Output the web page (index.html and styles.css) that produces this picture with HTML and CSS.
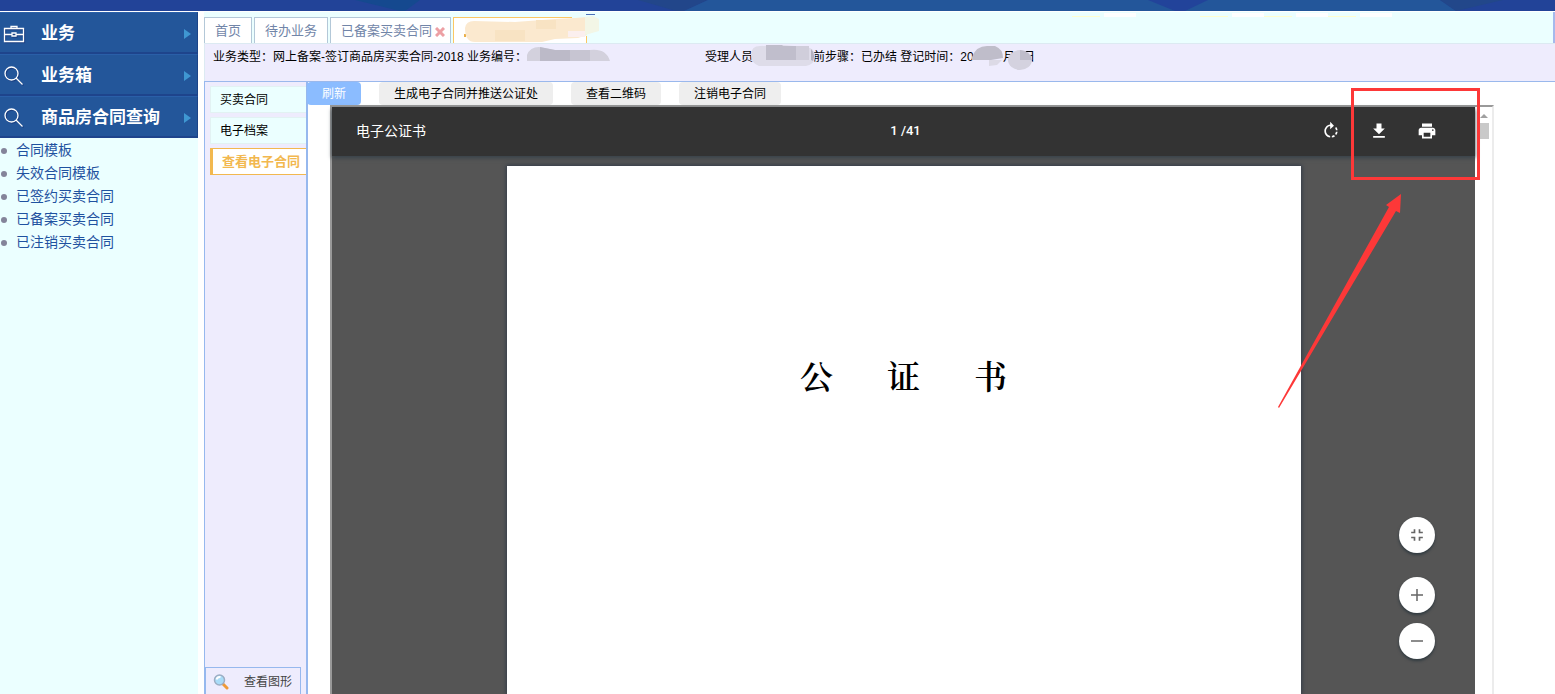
FILE: index.html
```html
<!DOCTYPE html>
<html lang="zh-CN">
<head>
<meta charset="utf-8">
<title>查看电子合同</title>
<link rel="stylesheet" href="styles.css">
</head>
<body>
<header class="banner">
  <svg viewBox="0 0 1555 11" preserveAspectRatio="none" aria-hidden="true">
    <path fill="#224398" d="M0 0H1555V11H0z"/>
    <path fill="#15498f" d="M355 0H420L405 11H400z"/>
    <path fill="#22468a" d="M638 0H708L684 11H676z"/>
    <path fill="#23569a" d="M708 0H1440L1456 11H684z"/>
    <path fill="#22439a" d="M1148 0H1208L1185 11H1175z"/>
    <path fill="#22478a" d="M1440 0H1503L1456 11z"/>
  </svg>
</header>
<div class="layout">
  <aside class="sidebar">
    <nav class="menu">
      <button class="menu-item" type="button">
        <svg class="menu-icon" viewBox="0 0 22 22" aria-hidden="true"><path d="M1.500 5.500h19v13h-19zM8 5V3.500h6V5M1.500 11.500H9M13 11.500h7.500M9 10h4v3H9z"/></svg>
        <span>业务</span><i class="caret"></i>
      </button>
      <button class="menu-item" type="button">
        <svg class="menu-icon" viewBox="0 0 22 22" aria-hidden="true"><circle cx="8.500" cy="8.500" r="6.500"/><path d="M13 13l6.500 6.500"/></svg>
        <span>业务箱</span><i class="caret"></i>
      </button>
      <button class="menu-item" type="button">
        <svg class="menu-icon" viewBox="0 0 22 22" aria-hidden="true"><circle cx="8.500" cy="8.500" r="6.500"/><path d="M13 13l6.500 6.500"/></svg>
        <span>商品房合同查询</span><i class="caret"></i>
      </button>
    </nav>
    <ul class="links">
      <li><a href="#">合同模板</a></li>
      <li><a href="#">失效合同模板</a></li>
      <li><a href="#">已签约买卖合同</a></li>
      <li><a href="#">已备案买卖合同</a></li>
      <li><a href="#">已注销买卖合同</a></li>
    </ul>
  </aside>
  <main class="content">
    <div class="tabs">
      <button class="tab" type="button">首页</button>
      <button class="tab" type="button">待办业务</button>
      <button class="tab closable" type="button">已备案买卖合同<svg class="close" viewBox="0 0 10 10" aria-hidden="true"><path d="M1 1l8 8M9 1L1 9"/></svg></button>
      <button class="tab active" type="button" aria-label="当前业务">
        <svg class="tab-mask" viewBox="0 0 146 34" aria-hidden="true">
          <path fill="#4d70b8" d="M133 0h9v1h-9z"/>
          <path fill="#eab04a" d="M11 20h2v3h-2z"/>
          <path fill="#ebffff" d="M119 3h27v19h-27z"/>
          <path fill="#fff" d="M119 6h13v16h-13z"/>
          <path fill="#fbe9cf" d="M12 14q1-7 9-7L62 8l40-3 20-1 12-1v18l-9 3-23 1-13 3H22q-10 0-10-14z"/>
          <path fill="#f8e3c3" d="M42 16h30v11H42zM83 6h20v9H83z"/>
          <path fill="#fbefee" d="M115 17h17v6h-17z"/>
          <path fill="#f3f6e6" d="M132 3l8-1 6 3v12l-14 4z"/>
        </svg>
      </button>
      <svg class="strip-marks" viewBox="0 0 323 6" aria-hidden="true">
        <path fill="#ffffcf" d="M0 4h28v1H0zM128 4h28v1h-28zM192 4h28v1h-28zM256 4h28v1h-28z"/>
        <path fill="#fff" d="M32 1h32v4H32zM160 1h32v4h-32zM224 1h32v4h-32zM288 1h32v4h-32z"/>
      </svg>
    </div>
    <section class="info">
      <span class="info-type">业务类型：网上备案-签订商品房买卖合同-2018 业务编号：</span>
      <svg class="mask-number" viewBox="0 0 83 15" aria-hidden="true"><path fill="#d3d1dd" d="M0 14V8Q3 0 12 0l16 3h35q16-2 20 11z"/><path fill="#bcbac8" d="M13 0l15 3h15v11H13z"/><path fill="#c7c5d2" d="M43 3h20v11H43z"/></svg>
      <span class="info-person">受理人员</span>
      <svg class="mask-person" viewBox="0 0 64 22" aria-hidden="true"><path fill="#dedce9" d="M0 10Q0 1 9 1l22-1 24 2q9 1 9 9t-9 10H8Q0 18 0 10z"/><path fill="#c0becc" d="M15 0h16l1 1h13v14H15z"/><path fill="#d0cedb" d="M45 1h13v14H45z"/><path fill="#b4b2bf" d="M60 4q5 5 2 12l-2-1z"/></svg>
      <span class="info-step">前步骤：已办结 登记时间：20</span>
      <svg class="mask-year" viewBox="0 0 31 22" aria-hidden="true"><path fill="#bfbdca" d="M0 12Q4 1 15 1h8q8 3 8 12l-12 2H0z"/><path fill="#dcdae6" d="M17 15h13l-5 5-8 1z"/></svg>
      <span>月</span>
      <svg class="mask-day" viewBox="0 0 24 24" aria-hidden="true"><ellipse cx="12" cy="14" rx="12" ry="10" fill="#d4d2df"/><path fill="#bfbdcb" d="M12 4q10 1 12 10H12z"/></svg>
      <span class="info-day">日</span>
    </section>
    <div class="workspace">
      <aside class="views">
        <button class="view" type="button">买卖合同</button>
        <button class="view" type="button">电子档案</button>
        <button class="view selected" type="button">查看电子合同</button>
        <button class="graph" type="button">
          <svg viewBox="0 0 16 16" aria-hidden="true"><path d="M10 10l4 4" stroke="#ee9a38" stroke-width="3" stroke-linecap="round"/><circle cx="6.500" cy="6" r="5" fill="#a9dcf8" stroke="#9cadc3" stroke-width="1.500"/><path d="M3.500 5.500q1-3 4-2.500" stroke="#fff" stroke-width="2" fill="none"/></svg>
          查看图形
        </button>
      </aside>
      <section class="document">
        <div class="actions">
          <button class="action primary" type="button">刷新</button>
          <button class="action" type="button">生成电子合同并推送公证处</button>
          <button class="action" type="button">查看二维码</button>
          <button class="action" type="button">注销电子合同</button>
        </div>
        <div class="frame">
          <div class="viewer">
            <div class="viewer-bar">
              <span class="viewer-title">电子公证书</span>
              <span class="pages">1 /41</span>
              <div class="tools">
                <button type="button" aria-label="旋转"><svg viewBox="0 0 24 24"><path d="M15.550 5.550L11 1v3.070C7.060 4.560 4 7.920 4 12s3.050 7.440 7 7.930v-2.020c-2.840-.48-5-2.940-5-5.910s2.160-5.430 5-5.910V10l4.550-4.450zM19.930 11c-.17-1.390-.72-2.730-1.620-3.890l-1.420 1.420c.54.75.88 1.600 1.020 2.470h2.020zM13 17.900v2.020c1.390-.17 2.740-.71 3.900-1.610l-1.440-1.440c-.75.54-1.590.89-2.460 1.030zm3.890-2.420l1.420 1.410c.9-1.160 1.450-2.500 1.620-3.890h-2.020c-.14.87-.48 1.720-1.020 2.480z"/></svg></button>
                <button type="button" aria-label="下载"><svg viewBox="0 0 24 24"><path d="M19 9h-4V3H9v6H5l7 7 7-7zM5 18v2h14v-2H5z"/></svg></button>
                <button type="button" aria-label="打印"><svg viewBox="0 0 24 24"><path d="M19 8H5c-1.660 0-3 1.340-3 3v6h4v4h12v-4h4v-6c0-1.660-1.340-3-3-3zm-3 11H8v-5h8v5zm3-7c-.55 0-1-.45-1-1s.45-1 1-1 1 .45 1 1-.45 1-1 1zm-1-9H6v4h12V3z"/></svg></button>
              </div>
            </div>
            <article class="page">
              <h1><span>公</span><span>证</span><span>书</span></h1>
            </article>
            <div class="zoom">
              <button class="fit" type="button" aria-label="适合页面"><svg viewBox="0 0 24 24"><path d="M5 16h3v3h2v-5H5v2zm3-8H5v2h5V5H8v3zm6 11h2v-3h3v-2h-5v5zm2-11V5h-2v5h5V8h-3z"/></svg></button>
              <button type="button" aria-label="放大"><svg viewBox="0 0 24 24"><path d="M20 13h-7v7h-2v-7H4v-2h7V4h2v7h7v2z"/></svg></button>
              <button type="button" aria-label="缩小"><svg viewBox="0 0 24 24"><path d="M20 13H4v-2h16v2z"/></svg></button>
            </div>
          </div>
          <div class="scroll" aria-hidden="true"><i class="scroll-up"></i><i class="scroll-thumb"></i></div>
          <div class="highlight"></div>
          <svg class="arrow" viewBox="0 0 124 214" aria-hidden="true"><path fill="#fd3838" d="M0 213L111 13l-3-2L123 0l-1 19-4-2L1 214z"/></svg>
        </div>
      </section>
    </div>
  </main>
</div>
</body>
</html>
```
FILE: styles.css
```css
* {
  box-sizing: border-box;
}

body {
  margin: 0;
  height: 100vh;
  display: flex;
  flex-direction: column;
  overflow: hidden;
  background: #fff;
  color: #000;
  font: 12px/24px "Liberation Sans", "Noto Sans CJK SC", sans-serif;
}

button {
  margin: 0;
  padding: 0;
  border: 0;
  background: none;
  color: inherit;
  font: inherit;
  white-space: nowrap;
  cursor: pointer;
}

svg {
  display: block;
}

.banner {
  flex: none;
  height: 11px;
  margin-bottom: 1px;
}

.banner svg {
  width: 100%;
  height: 100%;
}

.layout {
  flex: 1;
  min-height: 0;
  display: flex;
  gap: 6px;
}

.sidebar {
  flex: none;
  width: 198px;
  background: #ebffff;
}

.menu-item {
  width: 100%;
  height: 42px;
  display: flex;
  align-items: center;
  padding: 2px 6px 0 3px;
  border-top: 1px solid #2a5fa8;
  border-right: 1px solid #1b4488;
  border-bottom: 2px solid #1e448c;
  background: #23569a;
  color: #fff;
  font-size: 17px;
  font-weight: 700;
}

.menu-icon {
  width: 22px;
  height: 22px;
  margin-right: 16px;
  fill: none;
  stroke: #fff;
  stroke-width: 1.3;
  filter: drop-shadow(1px 1px 0 #1b3e80);
}

.caret {
  margin-left: auto;
  border: 5px solid transparent;
  border-left: 7px solid #3f97d2;
  border-right: 0;
}

.links {
  margin: 0;
  padding: 1px 0 0;
  list-style: none;
  font-size: 14px;
  line-height: 23px;
}

.links li {
  display: flex;
  align-items: center;
  gap: 9px;
}

.links li::before {
  content: "";
  width: 6px;
  height: 6px;
  margin-left: 1px;
  border-radius: 50%;
  background: #84849a;
}

.links a {
  color: #1f52a0;
  text-decoration: none;
}

.content {
  flex: 1;
  min-width: 0;
  display: flex;
  flex-direction: column;
}

.tabs {
  position: relative;
  flex: none;
  height: 31px;
  display: flex;
  align-items: flex-end;
  gap: 2px;
  background: #ebffff;
  border-right: 2px solid #a5b9ec;
}

.tab {
  height: 26px;
  display: flex;
  align-items: center;
  padding: 0 10px;
  border: 1px solid #b3c8d8;
  border-bottom: 0;
  background: #fff;
  color: #7185a8;
  font-size: 13px;
}

.tab.closable {
  padding-right: 5px;
}

.tab.active {
  position: relative;
  width: 134px;
  border-color: #fcc763;
}

.close {
  width: 10px;
  height: 10px;
  margin: 2px 0 0 3px;
  stroke: #eda0a4;
  stroke-width: 3;
}

.tab-mask {
  position: absolute;
  left: -1px;
  top: -4px;
  width: 146px;
  height: 34px;
}

.strip-marks {
  position: absolute;
  right: 158px;
  top: 0;
  width: 323px;
  height: 6px;
}

.info {
  flex: none;
  height: 38px;
  display: flex;
  align-items: flex-start;
  padding: 1px 0 0 8px;
  border-top: 1px solid #dceaf2;
  border-left: 1px solid #dceaf2;
  background: #eeecfd;
  white-space: nowrap;
}

.info-type {
  width: 314px;
}

.info svg {
  flex: none;
  z-index: 1;
}

.mask-number {
  width: 83px;
  height: 15px;
  margin: 2px 95px 0 0;
}

.info-person {
  width: 46px;
}

.mask-person {
  width: 64px;
  height: 22px;
  margin-right: -2px;
}

.info-step {
  width: 159px;
}

.mask-year {
  width: 31px;
  height: 22px;
}

.mask-day {
  width: 24px;
  height: 24px;
  margin: 1px 0 0 -7px;
}

.info-day {
  margin-left: -9px;
}

.workspace {
  flex: 1;
  min-height: 0;
  display: flex;
  border-top: 1px solid #9ab8ec;
}

.views {
  flex: none;
  width: 104px;
  display: flex;
  flex-direction: column;
  gap: 4px;
  padding-top: 4px;
  border: solid #96b8ee;
  border-width: 0 2px 0 1px;
  background: #eeecfd;
}

.view {
  height: 27px;
  margin-left: 5px;
  padding-left: 9px;
  border: 1px solid #e2f2f3;
  border-right: 0;
  background: #ebffff;
  text-align: left;
}

.view.selected {
  border: 1px solid #f2b84f;
  border-left-width: 3px;
  border-right: 0;
  background: #fff;
  color: #f2b84f;
  font-size: 13px;
  font-weight: 700;
}

.graph {
  width: 96px;
  height: 27px;
  margin-top: auto;
  display: flex;
  align-items: center;
  gap: 15px;
  padding: 2px 0 0 7px;
  border: 1px solid #96b8ee;
  border-bottom: 0;
  color: #444;
}

.graph svg {
  width: 16px;
  height: 16px;
  fill: none;
}

.document {
  flex: 1;
  min-width: 0;
  display: flex;
  flex-direction: column;
  margin-left: -1px;
}

.actions {
  flex: none;
  display: flex;
  gap: 18px;
}

.action {
  height: 23px;
  padding: 1px 15px 0;
  border-radius: 4px;
  background: #eee;
  line-height: 22px;
}

.action.primary {
  background: #8bbcff;
  color: #fff;
}

.frame {
  position: relative;
  flex: 1;
  min-height: 0;
  display: flex;
  margin: 0 61px 0 23px;
  border: 2px solid #999;
  border-right-color: #ececec;
  border-bottom: 0;
}

.viewer {
  position: relative;
  flex: 1;
  display: flex;
  flex-direction: column;
  align-items: center;
  background: #555;
}

.viewer-bar {
  flex: none;
  width: 100%;
  height: 49px;
  display: grid;
  grid-template-columns: 1fr auto 1fr;
  align-items: center;
  padding: 0 24px 2px;
  background: #333;
  box-shadow: 0 2px 4px #38424a;
  color: #fff;
  font-size: 14px;
}

.pages {
  padding-left: 4px;
  font-family: Roboto, sans-serif;
  font-size: 13px;
  font-weight: 500;
}

.tools {
  justify-self: end;
  display: flex;
  gap: 24px;
  margin-right: 12px;
}

.tools button {
  width: 24px;
  height: 24px;
  padding: 2px;
}

.tools svg {
  width: 20px;
  height: 20px;
  fill: #fff;
}

.page {
  flex: 1;
  width: 794px;
  margin-top: 10px;
  padding-top: 185px;
  background: #fff;
  box-shadow: 0 0 4px 1px #333c49;
}

.page h1 {
  display: flex;
  justify-content: center;
  gap: 54px;
  margin: 0;
  font: 600 33px/48px "Noto Serif CJK SC", "Noto Sans CJK SC", serif;
}

.zoom {
  position: absolute;
  right: 40px;
  bottom: 35px;
  display: flex;
  flex-direction: column;
  gap: 10px;
}

.zoom button {
  width: 36px;
  height: 36px;
  padding: 9px;
  border-radius: 50%;
  background: #fff;
  box-shadow: 0 2px 3px #303a40;
}

.zoom .fit {
  margin-bottom: 14px;
}

.zoom svg {
  width: 18px;
  height: 18px;
  fill: #666;
}

.zoom .fit svg {
  width: 20px;
  height: 20px;
  margin: -1px;
}

.scroll {
  flex: none;
  width: 17px;
  display: flex;
  flex-direction: column;
  align-items: center;
  gap: 5px;
  padding-top: 7px;
  background: #fff;
}

.scroll-up {
  border: 4px solid transparent;
  border-top: 0;
  border-bottom-color: #a0a0a0;
}

.scroll-thumb {
  width: 11px;
  height: 16px;
  background: #c9c9c9;
}

.highlight {
  position: absolute;
  right: 12px;
  top: -19px;
  width: 129px;
  height: 92px;
  border: 3px solid #fd3838;
}

.arrow {
  position: absolute;
  right: 90px;
  top: 87px;
  width: 124px;
  height: 214px;
}
```
